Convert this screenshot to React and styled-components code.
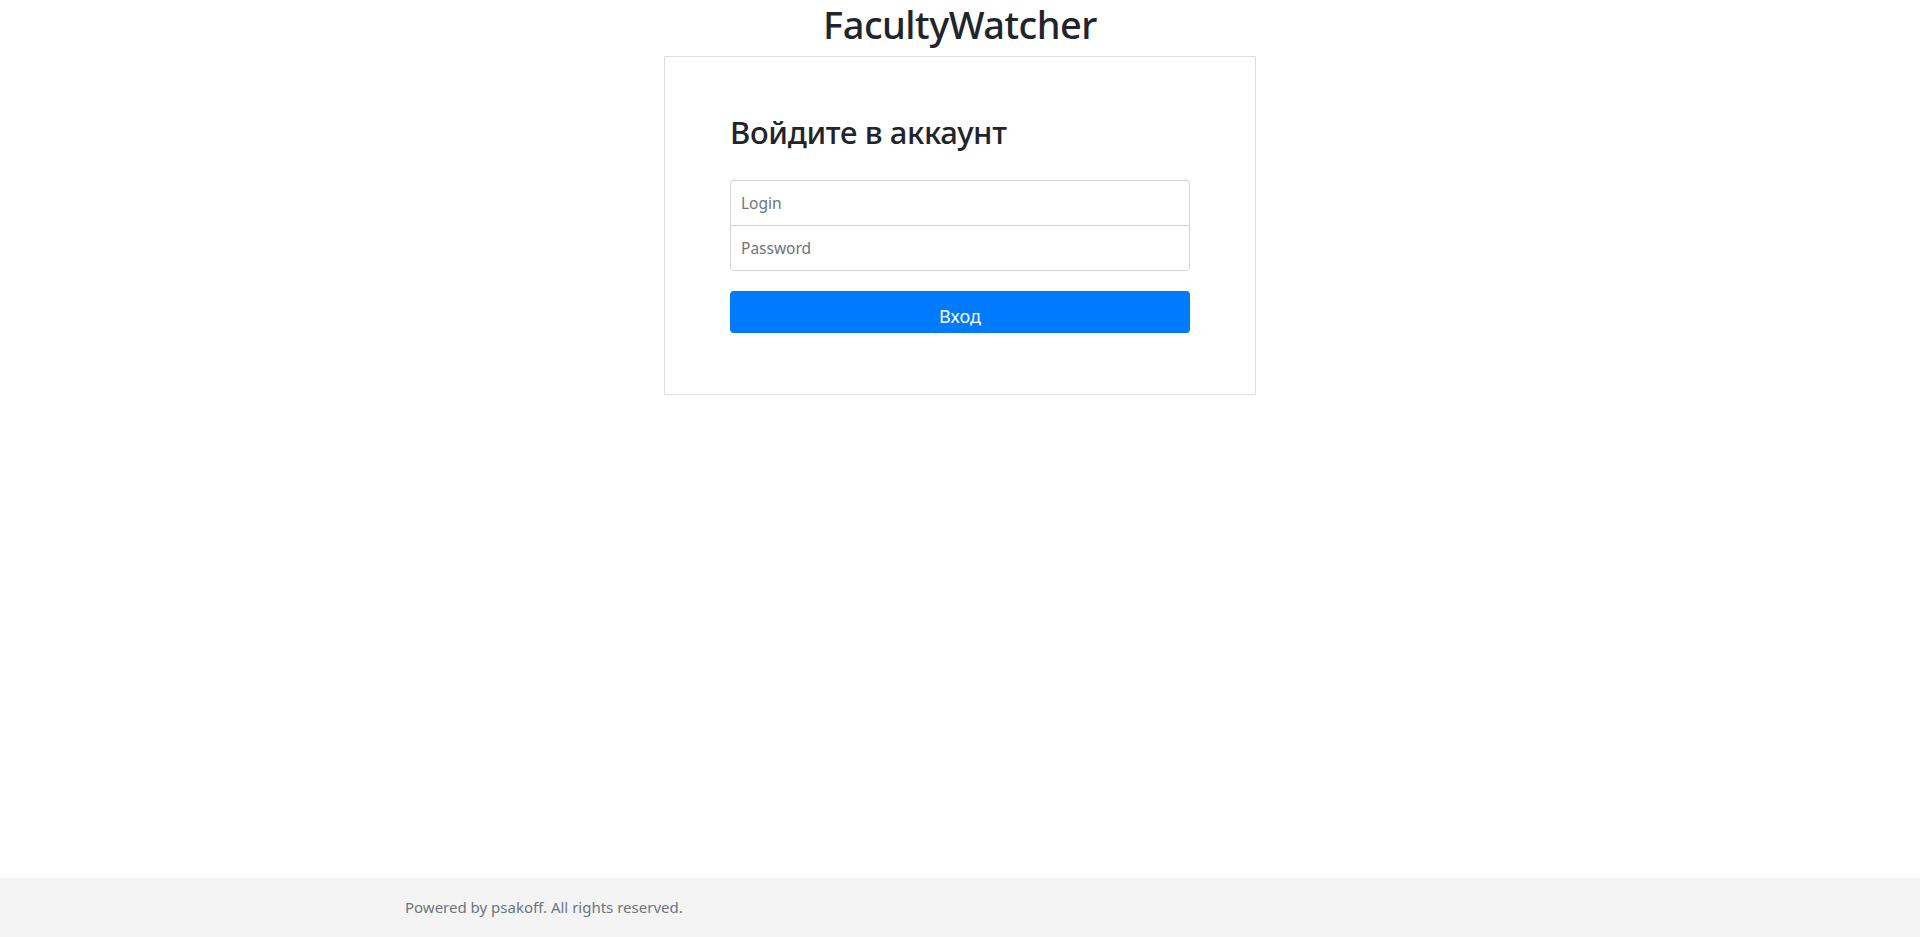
import React from "react";
import styled, { createGlobalStyle } from "styled-components";

const GlobalStyle = createGlobalStyle`
  html, body {
    margin: 0;
    padding: 0;
    height: 100%;
  }
  body {
    font-family: "Noto Sans", "Open Sans", sans-serif;
    font-size: 16px;
    line-height: 1.5;
    color: #212529;
    background: #ffffff;
  }
  #root {
    min-height: 100%;
  }
  *, *::before, *::after {
    box-sizing: border-box;
  }
`;

const Page = styled.div`
  display: flex;
  flex-direction: column;
  min-height: 100vh;
`;

const Main = styled.main`
  flex: 1;
  display: flex;
  flex-direction: column;
  align-items: center;
`;

const Brand = styled.h1`
  margin: 0 0 8px;
  font-size: 38px;
  font-weight: 500;
  line-height: 48px;
  letter-spacing: -0.5px;
  text-align: center;
  color: #212529;
`;

const Card = styled.div`
  width: 592px;
  border: 1px solid #e0e0e0;
  padding: 57px 65px 61px;
  background: #fff;
`;

const Heading = styled.h2`
  margin: 0 0 29px;
  font-size: 31px;
  font-weight: 500;
  line-height: 37px;
  letter-spacing: -0.35px;
  color: #212529;
`;

const Form = styled.form`
  display: flex;
  flex-direction: column;
`;

const Input = styled.input`
  display: block;
  width: 100%;
  height: 46px;
  padding: 10px;
  font-family: inherit;
  font-size: 15.5px;
  line-height: 24px;
  color: #495057;
  background: #fff;
  border: 1px solid #ced4da;
  border-radius: ${(p) => (p.$pos === "top" ? "4px 4px 0 0" : "0 0 4px 4px")};
  margin-bottom: ${(p) => (p.$pos === "top" ? "-1px" : "20px")};
  outline: none;

  &::placeholder {
    color: #6c757d;
  }
`;

const SubmitButton = styled.button`
  display: block;
  width: 100%;
  height: 42px;
  padding: 12px 0 3px;
  font-family: inherit;
  font-size: 18px;
  line-height: 27px;
  color: #fff;
  background: #007bff;
  border: none;
  border-radius: 4px;
  cursor: pointer;
`;

const Footer = styled.footer`
  height: 59px;
  background: #f4f4f4;
`;

const FooterInner = styled.div`
  width: 1140px;
  margin: 0 auto;
  padding: 0 15px;
  line-height: 59px;
  font-size: 15px;
  color: #6c757d;
`;

export default function App() {
  return (
    <>
      <GlobalStyle />
      <Page>
        <Main>
          <Brand>FacultyWatcher</Brand>
          <Card>
            <Heading>Войдите в аккаунт</Heading>
            <Form onSubmit={(e) => e.preventDefault()}>
              <Input $pos="top" type="text" placeholder="Login" />
              <Input $pos="bottom" type="password" placeholder="Password" />
              <SubmitButton type="submit">Вход</SubmitButton>
            </Form>
          </Card>
        </Main>
        <Footer>
          <FooterInner>Powered by psakoff. All rights reserved.</FooterInner>
        </Footer>
      </Page>
    </>
  );
}
